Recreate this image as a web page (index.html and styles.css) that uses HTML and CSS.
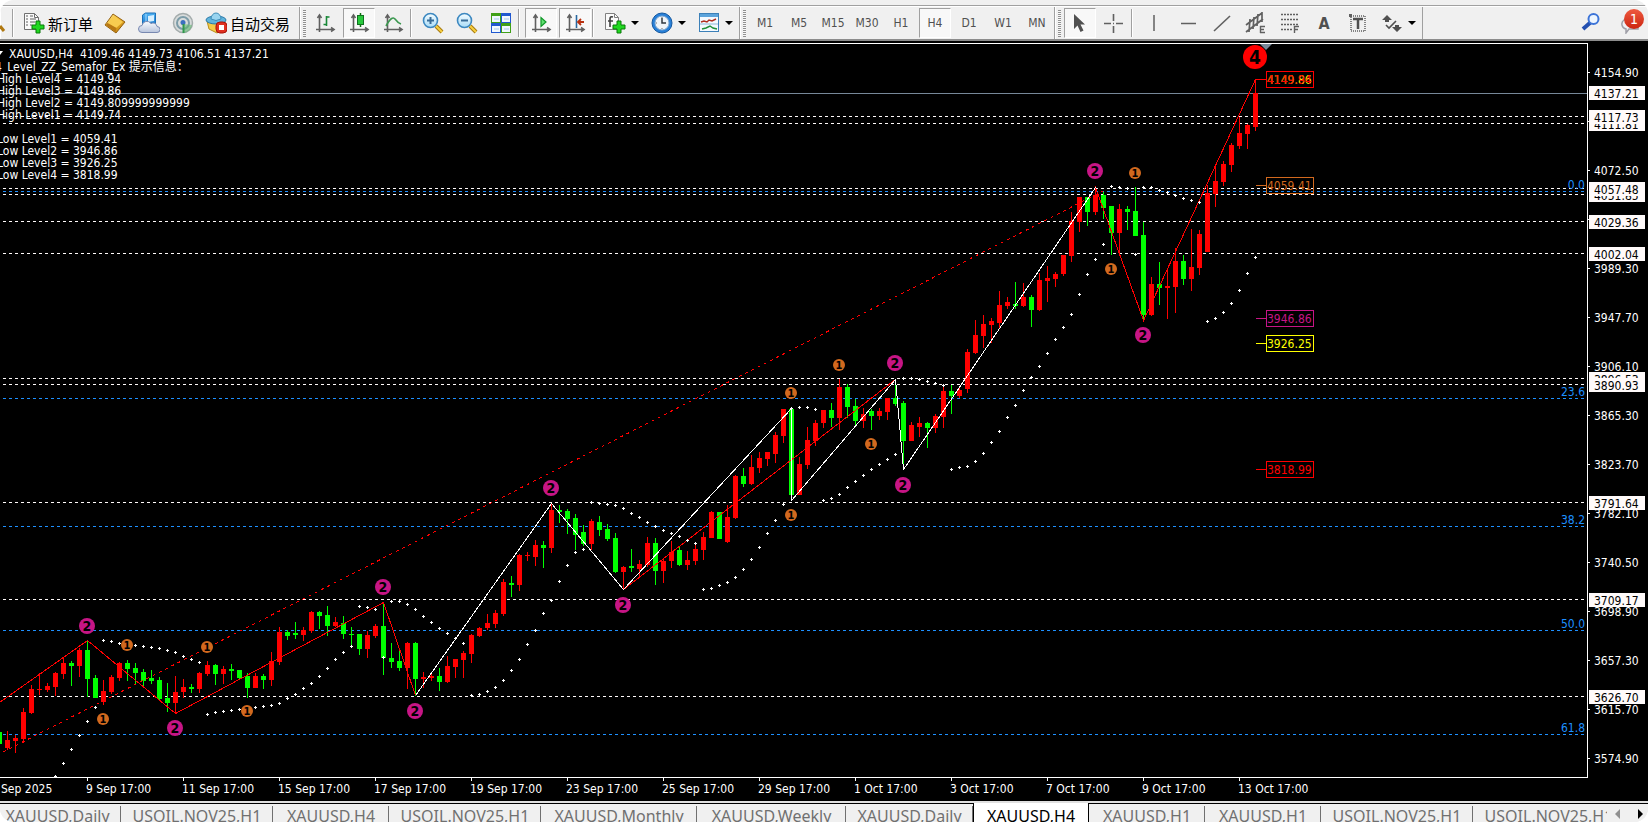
FILE: index.html
```
<!DOCTYPE html>
<html lang="zh-CN">
<head>
    <meta charset="UTF-8">
    <meta name="viewport" content="width=device-width, initial-scale=1.0">
    <title>XAUUSD,H4</title>
    <link rel="stylesheet" href="styles.css">
</head>
<body>
    <svg width="0" height="0" class="defs" aria-hidden="true">
        <defs>
            <linearGradient id="gold" x1="0" y1="0" x2="1" y2="1"><stop offset="0" stop-color="#fff0a0"/><stop offset=".5" stop-color="#f0b428"/><stop offset="1" stop-color="#a86a08"/></linearGradient>
            <linearGradient id="sky" x1="0" y1="0" x2="0" y2="1"><stop offset="0" stop-color="#50b4f4"/><stop offset="1" stop-color="#1c7cd0"/></linearGradient>
            <linearGradient id="cloud" x1="0" y1="0" x2="0" y2="1"><stop offset="0" stop-color="#fafcff"/><stop offset="1" stop-color="#b8c4dc"/></linearGradient>
            <linearGradient id="glass" x1="0" y1="0" x2="0" y2="1"><stop offset="0" stop-color="#f4fcff"/><stop offset="1" stop-color="#a8dcf8"/></linearGradient>
            <!-- 坐标轴图标 -->
            <g id="axes" fill="none" stroke="#606060" stroke-width="1.6">
                <path d="M5.500 20V4M2 17.500H19"/>
                <path d="M3.500 6L5.500 3L7.500 6M17 15.500L20 17.500L17 19.500"/>
            </g>
            <g id="plus"><path d="M12 9h4v4h4v4h-4v4h-4v-4H8v-4h4z" fill="#20d820" stroke="#087808"/></g>
        </defs>
    </svg>

    <div class="menu-edge"></div>

    <!-- 工具栏 -->
    <div class="toolbar">
        <div class="group group-main">
            <svg class="cut" viewBox="0 0 12 22"><path d="M0 14L4 19" stroke="#b07810" stroke-width="3"/></svg>
            <span class="sep"></span>
            <button class="text-btn">
                <svg class="icon" viewBox="0 0 22 22"><path d="M1.500 1.500h10l4 4v12h-14z" fill="#fafafa" stroke="#707070"/><path d="M11.500 1.500v4h4" fill="none" stroke="#707070"/><path d="M3 4h2M7 4h3M3 7h2M7 7h6M3 10h2M7 10h5M3 13h2M7 13h2" stroke="#606060"/><use href="#plus" x="1"/></svg>
                新订单
            </button>
            <button class="btn" aria-label="市场报价"><svg class="icon" viewBox="0 0 22 22"><path d="M1 13L9 2l12 8-9 11z" fill="url(#gold)" stroke="#946010"/><path d="M4 11l6-7 9 6-7 6z" fill="#f8cc50"/><path d="M1.500 13l10 7 1-4-9-5z" fill="#b87814"/></svg></button>
            <button class="btn" aria-label="数据窗口"><svg class="icon" viewBox="0 0 22 22"><path d="M4.500 3l3-2h10v11h-13z" fill="url(#sky)" stroke="#1c70b8"/><path d="M8 2v10" stroke="#a8dcff"/><path d="M10 4l6-1v6l-6 1z" fill="#d8f0ff"/><path d="M4 20.500a3.500 3.500 0 0 1 0-7 5 5 0 0 1 9-2 4 4 0 0 1 6 3 3 3 0 0 1 0 6z" fill="url(#cloud)" stroke="#7888b0"/></svg></button>
            <button class="btn" aria-label="信号"><svg class="icon" viewBox="0 0 22 22"><circle cx="11" cy="11" r="9.500" fill="#d8dcdc" stroke="#a4acac" stroke-width="1.500"/><circle cx="11" cy="11" r="6" fill="none" stroke="#7c9ca8" stroke-width="2"/><circle cx="11" cy="10.500" r="2.500" fill="#3c70c0"/><path d="M11 12l1 9a10 10 0 0 0 8-8" fill="#60b870" opacity=".6"/><path d="M11.500 12v9" stroke="#30984c" stroke-width="2"/></svg></button>
            <button class="text-btn">
                <svg class="icon" viewBox="0 0 22 22"><path d="M2 9l2 8 8 4 6-4 2-8z" fill="#f4cc48" stroke="#b88c18"/><ellipse cx="11" cy="8" rx="10" ry="4" fill="#60b4dc" stroke="#2878a8"/><path d="M6 7a5 6 0 0 1 10 0q-5 3-10 0z" fill="#98d4f0" stroke="#3c8cb8"/><rect x="11" y="10" width="11" height="11" rx="4" fill="#e03020" stroke="#a81408"/><rect x="14" y="13" width="5" height="5" fill="#fff"/></svg>
                自动交易
            </button>
        </div>

        <div class="group">
            <span class="grip"></span>
            <button class="btn" aria-label="柱状图"><svg class="icon" viewBox="0 0 22 22"><use href="#axes"/><path d="M12.500 4v10M12.500 5h3M9.500 12.500h3" stroke="#188838" stroke-width="1.600"/></svg></button>
            <button class="btn pressed" aria-label="阴阳烛"><svg class="icon" viewBox="0 0 22 22"><use href="#axes"/><path d="M12.500 1v14" stroke="#107010" stroke-width="1.500"/><rect x="9.500" y="3.500" width="6" height="9" fill="#28c83c" stroke="#107020"/></svg></button>
            <button class="btn" aria-label="折线图"><svg class="icon" viewBox="0 0 22 22"><use href="#axes"/><path d="M4 14Q10 3 13 7T19 12" fill="none" stroke="#3c9850" stroke-width="1.600"/></svg></button>
            <span class="sep"></span>
            <button class="btn" aria-label="放大"><svg class="icon" viewBox="0 0 22 22"><path d="M14 14l6 6" stroke="#a87c10" stroke-width="4"/><path d="M14 14l6 6" stroke="#f8d040" stroke-width="2"/><circle cx="8.500" cy="8.500" r="7" fill="url(#glass)" stroke="#3c88c0" stroke-width="1.600"/><path d="M5 8.500h7M8.500 5v7" stroke="#386c98" stroke-width="2"/></svg></button>
            <button class="btn" aria-label="缩小"><svg class="icon" viewBox="0 0 22 22"><path d="M14 14l6 6" stroke="#a87c10" stroke-width="4"/><path d="M14 14l6 6" stroke="#f8d040" stroke-width="2"/><circle cx="8.500" cy="8.500" r="7" fill="url(#glass)" stroke="#3c88c0" stroke-width="1.600"/><path d="M5 8.500h7" stroke="#386c98" stroke-width="2"/></svg></button>
            <button class="btn" aria-label="平铺窗口"><svg class="icon" viewBox="0 0 22 22"><path d="M1 1h10v10H1zM11 11h10v10H11z" fill="#40a018"/><path d="M11 1h10v10H11zM1 11h10v10H1z" fill="#2058d0"/><path d="M2 4h8v6H2zM12 4h8v6h-8zM2 14h8v6H2zM12 14h8v6h-8z" fill="#f0f8ff"/><path d="M4 7h5M14 7h5M4 17h5M14 17h5" stroke="#a8c8e8"/></svg></button>
            <span class="sep"></span>
            <button class="btn pressed" aria-label="自动滚动"><svg class="icon" viewBox="0 0 22 22"><use href="#axes"/><path d="M11 5.500v9l5-4.500z" fill="#60e070" stroke="#109828" stroke-width="1.200"/></svg></button>
            <button class="btn pressed" aria-label="图表平移"><svg class="icon" viewBox="0 0 22 22"><use href="#axes"/><path d="M12.500 3v13" stroke="#2868a0" stroke-width="1.600"/><path d="M14 10h6M17 7l-3 3 3 3" fill="none" stroke="#b83010" stroke-width="1.800"/></svg></button>
            <span class="sep"></span>
            <button class="btn drop" aria-label="指标"><svg class="icon" viewBox="0 0 22 22"><path d="M1.500 1.500h9l4 4v12h-13z" fill="#fafafa" stroke="#808080"/><path d="M10.500 1.500v4h4" fill="none" stroke="#808080"/><path d="M9 5q-3-1-3 2v8M4 9h5" fill="none" stroke="#404040" stroke-width="1.600"/><use href="#plus" x="1"/></svg><i class="caret"></i></button>
            <button class="btn drop" aria-label="时间周期"><svg class="icon" viewBox="0 0 22 22"><circle cx="11" cy="11" r="10" fill="#2880d8" stroke="#1458a0"/><circle cx="11" cy="11" r="7" fill="#f0f4f8" stroke="#80a8d0"/><path d="M11 6v5h4" fill="none" stroke="#303840" stroke-width="1.500"/><path d="M11 5v1M11 16v1M5 11h1" stroke="#707070"/></svg><i class="caret"></i></button>
            <button class="btn drop" aria-label="模板"><svg class="icon" viewBox="0 0 22 22"><rect x="1.500" y="1.500" width="19" height="18" fill="#f4faff" stroke="#3c80b8"/><path d="M2 2h18v3H2z" fill="#5ca4dc"/><path d="M3 10l3-1 3 1 2-2 3 1 4-2" fill="none" stroke="#b03020" stroke-width="1.500"/><path d="M2 12h18" stroke="#90b8d8"/><path d="M4 17l4-1 4-2 3 2 4 1" fill="none" stroke="#209038" stroke-width="1.500"/></svg><i class="caret"></i></button>
        </div>

        <!-- 时间周期 -->
        <div class="group">
            <span class="grip"></span>
            <button class="btn">M1</button>
            <button class="btn">M5</button>
            <button class="btn">M15</button>
            <button class="btn">M30</button>
            <button class="btn">H1</button>
            <button class="btn pressed">H4</button>
            <button class="btn">D1</button>
            <button class="btn">W1</button>
            <button class="btn">MN</button>
        </div>

        <!-- 画线工具 -->
        <div class="group group-last">
            <span class="grip"></span>
            <button class="btn pressed" aria-label="光标"><svg class="icon" viewBox="0 0 22 22"><path d="M5 2v15l3.500-3.500L11.500 20l3-1.500-3-6H16z" fill="#505050"/></svg></button>
            <button class="btn" aria-label="十字准线"><svg class="icon" viewBox="0 0 22 22"><path d="M10.500 2v7M10.500 14v7M1 11.500h7M13 11.500h7M10 11.500h1" stroke="#606060" stroke-width="1.600"/></svg></button>
            <span class="sep"></span>
            <button class="btn" aria-label="垂直线"><svg class="icon" viewBox="0 0 22 22"><path d="M11 3v16" stroke="#606060" stroke-width="1.500"/></svg></button>
            <button class="btn" aria-label="水平线"><svg class="icon" viewBox="0 0 22 22"><path d="M4 11.500h15" stroke="#606060" stroke-width="1.500"/></svg></button>
            <button class="btn" aria-label="趋势线"><svg class="icon" viewBox="0 0 22 22"><path d="M3 19L19 4" stroke="#606060" stroke-width="1.600"/></svg></button>
            <button class="btn" aria-label="等距通道"><svg class="icon" viewBox="0 0 22 22"><path d="M1 13L17 1M1 20L18 7M5 7l-1 13M9 5L8 17M13 2l-1 12M17 0v10" stroke="#606060" stroke-width="1.700"/><path d="M15.500 14v7M15 14.500h5M15 17.500h4M15 20.500h5" stroke="#606060" stroke-width="1.400"/></svg></button>
            <button class="btn" aria-label="斐波那契回调"><svg class="icon" viewBox="0 0 22 22"><path d="M2 2.500h17M2 7.500h17M2 12.500h17M2 17.500h11" stroke="#606060" stroke-width="1.500" stroke-dasharray="2 1"/><path d="M15.500 14v7M15 14.500h5M15 17.500h4" stroke="#606060" stroke-width="1.400"/></svg></button>
            <button class="btn letter">A</button>
            <button class="btn" aria-label="文字标签"><svg class="icon" viewBox="0 0 22 22"><path d="M4 4h14v15H4z" fill="none" stroke="#606060" stroke-width="1.500" stroke-dasharray="1 1"/><path d="M6 7h10M11 7v10" stroke="#505050" stroke-width="2.500"/><path d="M2 2h3v3H2z" fill="#606060"/></svg></button>
            <button class="btn drop" aria-label="箭头"><svg class="icon" viewBox="0 0 22 22"><path d="M6 3l5 5H8v2H4V8H1zM16 20l5-5h-3v-2h-4v2h-3z" fill="#505050"/><path d="M5 13l3 3 7-7" fill="none" stroke="#505050" stroke-width="1.600"/></svg><i class="caret"></i></button>
        </div>

        <div class="tray">
            <button class="btn" aria-label="搜索"><svg class="icon" viewBox="0 0 22 22"><path d="M3 17l8-7" stroke="#2450b0" stroke-width="4"/><circle cx="13.500" cy="7" r="5" fill="#eef6ff" stroke="#3c74d8" stroke-width="2"/></svg></button>
            <button class="btn mail" aria-label="消息">
                <svg class="icon" viewBox="0 0 22 22"><path d="M4 8h14v9h-9l-3 4v-4a5 5 0 0 1-2-9z" fill="#f0f0f4" stroke="#a0a0a8" stroke-width="1.500"/></svg>
                <span class="badge">1</span>
            </button>
        </div>
    </div>

    <!-- 图表 -->
    <div class="chart">
        <div class="plot"><svg id="plot"></svg></div>
        <div class="scale"><svg id="scale"></svg></div>
        <div class="dates"><svg id="dates"></svg></div>
    </div>

    <!-- 图表标签 -->
    <div class="tabs">
        <button class="tab daily first">XAUUSD,Daily</button>
        <button class="tab oil">USOIL.NOV25,H1</button>
        <button class="tab">XAUUSD,H4</button>
        <button class="tab oil">USOIL.NOV25,H1</button>
        <button class="tab monthly">XAUUSD,Monthly</button>
        <button class="tab weekly">XAUUSD,Weekly</button>
        <button class="tab daily">XAUUSD,Daily</button>
        <button class="tab active">XAUUSD,H4</button>
        <button class="tab">XAUUSD,H1</button>
        <button class="tab">XAUUSD,H1</button>
        <button class="tab oil">USOIL.NOV25,H1</button>
        <button class="tab oil">USOIL.NOV25,H1</button>
        <div class="tab-scroll">
            <button class="arrow left" aria-label="向左"></button>
            <button class="arrow right" aria-label="向右"></button>
        </div>
    </div>

    <script src="chart.js"></script>
</body>
</html>
```
FILE: styles.css
```
* {
    box-sizing: border-box;
}
html {
    background: white;
}
body {
    margin: 0;
    height: 100vh;
    display: flex;
    flex-direction: column;
    overflow: hidden;
    border-radius: 14px;
    background: #f0f0f0;
    font-family: "DejaVu Sans Condensed", "Noto Sans", "Noto Sans CJK SC", sans-serif;
    font-size: 12px;
}
button {
    border: none;
    background: none;
    padding: 0;
    margin: 0;
    font: inherit;
    color: inherit;
}
.defs {
    position: absolute;
}
.menu-edge {
    height: 7px;
    flex: none;
    border-bottom: 1px solid white;
    box-shadow: inset 0 -1px #a0a0a0;
}

/* 工具栏 */
.toolbar {
    display: flex;
    flex: none;
    height: 34px;
    border-bottom: 2px solid #8c8c8c;
    color: #505050;
}
.group {
    display: flex;
    flex: none;
    align-items: center;
    border-left: 1px solid #a0a0a0;
    box-shadow: inset 1px 0 white;
}
.group-main {
    width: 299px;
    border-left: none;
}
.group-last {
    border-right: 1px solid #a0a0a0;
}
.cut {
    width: 12px;
    height: 22px;
}
.sep {
    width: 6px;
    height: 28px;
    border-left: 1px solid #a0a0a0;
    background: linear-gradient(white, white) 0 0 / 1px 100% no-repeat;
}
.grip {
    width: 8px;
    height: 27px;
    padding-left: 3px;
}
.grip::before {
    content: "";
    display: block;
    width: 3px;
    height: 100%;
    background: repeating-linear-gradient(#909090 0 1px, #f8f8f8 1px 2px);
}
.btn {
    display: flex;
    align-items: center;
    justify-content: center;
    width: 34px;
    height: 30px;
}
.pressed {
    width: 32px;
    margin: 0 1px;
    border: 1px solid white;
    border-top-color: #a0a0a0;
    border-left-color: #a0a0a0;
    background: #f8f8f8;
}
.drop {
    width: 47px;
    gap: 5px;
}
.letter {
    font-size: 16px;
    font-weight: bold;
}
.text-btn {
    display: flex;
    align-items: center;
    gap: 3px;
    padding: 0 5px;
    height: 30px;
    color: black;
    font-family: "Noto Sans CJK SC", sans-serif;
    font-size: 15px;
    white-space: nowrap;
}
.icon {
    width: 22px;
    height: 22px;
    flex: none;
}
.caret {
    border: 4px solid transparent;
    border-top-color: black;
    border-bottom: none;
}
.tray {
    display: flex;
    align-items: center;
    margin-left: auto;
    gap: 6px;
}
.mail {
    position: relative;
}
.badge {
    position: absolute;
    top: 1px;
    right: 4px;
    width: 20px;
    height: 20px;
    border-radius: 50%;
    background: linear-gradient(#ee5a40, #cc2410);
    color: white;
    font-size: 14px;
    line-height: 20px;
    text-align: center;
}

/* 图表 */
.chart {
    flex: 1;
    min-height: 0;
    display: grid;
    grid-template-columns: 1fr 60px;
    grid-template-rows: 1fr 23px;
    padding-top: 2px;
    background: black;
}
.chart svg {
    display: block;
    width: 100%;
    height: 100%;
}
.plot {
    min-width: 0;
    min-height: 0;
    border: 1px solid white;
    border-left: none;
}
.dates {
    grid-column: 1 / 3;
}
.chart text {
    fill: white;
    white-space: pre;
}
.chart .on-tag {
    fill: black;
}
.chart .fibo {
    fill: #1e90ff;
    text-anchor: end;
}
.chart .mark {
    fill: black;
    font-weight: bold;
    text-anchor: middle;
}

/* 图表标签 */
.tabs {
    position: relative;
    display: flex;
    flex: none;
    height: 21px;
    overflow: hidden;
    border-top: 2px solid #e0e0e0;
    box-shadow: inset 0 1px black;
    background: #f0f0f0;
    font-family: "Noto Sans", sans-serif;
    font-size: 16px;
    color: #707070;
}
.tab {
    flex: none;
    width: 116px;
    height: 24px;
    margin-top: 1px;
    line-height: 24px;
    white-space: nowrap;
    background: linear-gradient(#707070, #707070) 100% 2px / 1px 100% no-repeat;
}
.daily {
    width: 127px;
}
.first {
    margin-left: -6px;
}
.oil {
    width: 152px;
}
.monthly {
    width: 156px;
}
.weekly {
    width: 149px;
}
.active {
    height: 26px;
    margin-top: 0;
    line-height: 26px;
    border: solid black;
    border-width: 0 1px;
    background: white;
    color: black;
}
.tab-scroll {
    position: absolute;
    top: 1px;
    right: 0;
    height: 20px;
    display: flex;
    align-items: center;
    gap: 18px;
    padding: 0 5px 0 8px;
    background: #f0f0f0;
}
.arrow {
    width: 5px;
    border: solid transparent;
    border-width: 5px 0;
}
.left {
    border-right: 5px solid #909090;
}
.right {
    border-left: 5px solid black;
}
```
FILE: chart.js
```
// 窗口内 y 坐标, 绘图区从 44 开始
const TOP = 44;
const STEP = 8;
const RED = '#ff0000';
const GREEN = '#00ff00';

// 每根K线: 颜色, 最高, 实体上, 实体下, 最低 (从第 -1 根开始)
const candles = `g 732 732 744 744|r 731 740 748 750|r 735 738 741 753|r 708 712 739 743|r 685 689 713 714|r 673 689 690 695
r 683 686 690 692|r 672 673 687 696|r 657 663 674 679|g 661 663 666 686|r 648 650 666 677|g 640 650 679 697
g 675 678 698 698|r 680 691 702 705|r 675 677 692 694|r 662 663 678 681|g 660 663 669 681|g 663 668 673 684
g 669 672 681 688|g 670 678 681 684|g 677 680 699 700|g 683 698 703 712|r 676 692 703 713|r 679 687 692 698
g 684 687 689 693|r 672 673 689 693|r 661 665 674 676|g 664 665 674 685|r 666 669 674 684|g 664 669 671 680
g 670 670 678 680|g 673 676 688 698|r 673 676 688 688|g 674 676 680 689|r 652 661 680 686|r 627 632 662 665
g 630 632 636 640|g 622 633 635 639|r 627 630 635 641|r 611 612 631 633|g 611 612 616 629|g 606 615 626 636
r 617 622 626 627|g 616 623 634 639|g 627 634 635 646|g 634 634 649 655|r 631 635 649 658|r 624 626 636 638
g 602 626 658 675|g 643 658 662 668|g 650 661 668 671|r 642 643 668 689|g 642 643 679 696|r 672 677 679 688
r 673 676 678 681|g 668 676 682 691|r 656 666 682 683|r 659 659 667 678|r 651 653 660 678|r 634 635 654 663
r 627 628 636 637|r 614 623 628 630|r 610 613 624 628|r 579 582 614 616|g 576 583 585 597|r 554 555 585 591
r 552 555 556 561|r 540 545 557 566|g 541 545 548 568|r 503 510 548 553|g 505 510 512 523|g 509 511 519 534
g 514 518 535 550|g 525 532 544 546|r 519 521 544 550|g 516 522 530 536|g 524 529 539 541|g 533 538 572 573
r 566 567 572 589|g 549 566 568 572|r 560 564 569 576|r 537 543 565 567|g 538 543 571 585|r 559 561 571 583
r 541 552 561 568|g 547 550 565 566|r 551 560 565 570|r 544 549 561 565|r 532 537 550 560|r 511 512 538 538
g 512 512 539 539|r 505 517 542 543|r 475 476 518 519|g 468 476 484 487|r 455 467 484 485|r 452 458 468 473
r 452 452 459 466|r 432 435 454 463|r 409 409 436 443|g 408 409 495 501|r 457 464 495 495|r 427 440 465 469
r 420 423 441 446|r 410 410 423 428|g 403 410 418 427|r 379 387 418 430|g 384 387 407 418|g 399 406 421 425
r 408 414 421 428|g 409 411 416 430|r 408 411 416 420|r 398 398 412 420|g 379 398 404 406|g 401 403 441 469
r 422 425 441 441|r 417 423 427 437|g 422 423 428 448|r 414 416 428 433|r 385 391 417 428|g 385 391 396 414
r 388 390 396 398|r 349 352 389 393|r 320 335 353 354|r 315 324 336 348|r 318 321 325 343|r 291 305 323 328
r 297 302 306 309|g 282 304 306 309|r 283 297 306 307|g 295 297 310 327|r 273 280 310 311|r 266 278 281 302
r 272 274 279 287|r 255 255 274 276|r 212 221 256 262|r 197 197 222 232|g 197 197 212 226|r 186 195 212 215
g 192 195 208 219|g 206 206 233 255|r 204 209 233 254|g 206 209 212 230|g 187 211 236 236|g 222 235 315 322
r 277 284 315 316|g 262 284 288 305|r 270 286 288 319|r 248 261 287 313|g 255 261 279 285|r 229 267 279 291
r 230 234 268 275|r 185 193 252 252|r 164 181 194 207|r 161 164 182 186|r 143 145 165 172|r 117 133 146 149
r 124 125 134 149|r 79 93 127 131`.split(/[|\n]/);

// 抛物线指标的点, 从第 6 根开始
const sar = [776, 763, 749, 735, 721, 707, 640, 641, 643, 644, 645, 646, 647, 648, 650, 652, 656, 659, 662,
    714, 712, 711, 710, 709, 708, 707, 706, 705, 703, 698, 694, 688, 683, 676, 668, 659, 652, 646,
    606, 607, 609, 657, 601, 601, 604, 609, 616, 622, 628, 633, 638, 643,
    695, 694, 691, 687, 680, 670, 659, 644, 630, 613, 600, 581, 565, 552, 549,
    502, 503, 504, 505, 508, 513, 517, 522, 526, 530, 533, 536, 540, 543,
    589, 588, 585, 582, 577, 569, 559, 547, 533, 520, 504,
    408, 407, 407, 409, 500, 498, 494, 487, 481, 475, 469, 464, 459, 454,
    378, 378, 379, 381, 383, 385, 469, 467, 466, 461, 453, 442, 431, 417, 405, 390, 377, 366, 353, 339,
    327, 314, 294, 274, 259, 244, 186, 187, 188, 254, 187, 187, 190, 192, 195, 198, 200, 202,
    321, 318, 312, 303, 290, 273, 257];

// 水平价位 [y, 价格], 靠后的盖住靠前的
const levels = [[123, '4111.81'], [116, '4117.73'], [194, '4051.85'], [188, '4057.48'], [221, '4029.36'], [253, '4002.04'],
    [378, '3896.53'], [384, '3890.93'], [502, '3791.64'], [599, '3709.17'], [696, '3626.70']];
const fibo = [[191, '0.0'], [398, '23.6'], [526, '38.2'], [630, '50.0'], [734, '61.8']];
const ticks = [[72, '4154.90'], [121, ''], [170, '4072.50'], [219, ''], [268, '3989.30'], [317, '3947.70'], [366, '3906.10'],
    [415, '3865.30'], [464, '3823.70'], [513, '3782.10'], [562, '3740.50'], [611, '3698.90'], [660, '3657.30'],
    [709, '3615.70'], [758, '3574.90']];
const days = ['9 Sep', '11 Sep', '15 Sep', '17 Sep', '19 Sep', '23 Sep', '25 Sep', '29 Sep', '1 Oct', '3 Oct', '7 Oct', '9 Oct', '13 Oct'];

const X = i => 7 + i * STEP;
const line = (x1, y1, x2, y2, color, dash) =>
    `<line x1="${x1}" y1="${y1 - TOP}" x2="${x2}" y2="${y2 - TOP}" stroke="${color}" stroke-dasharray="${dash || 'none'}" shape-rendering="crispEdges"/>`;
const rect = (x, y, w, h, color) =>
    `<rect x="${x}" y="${y - TOP}" width="${w}" height="${h}" fill="${color}" shape-rendering="crispEdges"/>`;
const text = (x, y, str, cls) => `<text x="${x}" y="${y - TOP}" class="${cls || ''}">${str}</text>`;
const zigzag = (points, color) =>
    `<polyline points="${points.map(p => `${p[0] + 0.5},${p[1] - TOP + 0.5}`).join(' ')}" fill="none" stroke="${color}" shape-rendering="crispEdges"/>`;

// 水平线和斐波那契线
let out = '';
levels.forEach(([y]) => out += line(3, y + 0.5, '100%', y + 0.5, '#fffafa', '3 3'));
fibo.forEach(([y]) => out += line(3, y + 0.5, '100%', y + 0.5, '#1e90ff', '3 3'));
out += line(0, 93.5, '100%', 93.5, '#778899');

// K线
candles.forEach((row, n) => {
    const [c, high, top, bottom, low] = row.split(' ').map((v, k) => k ? Number(v) : v);
    const x = X(n - 1);
    const color = c === 'r' ? RED : GREEN;
    out += rect(x, high, 1, low - high, color) + rect(x - 2, top, 5, Math.max(1, bottom - top), color);
});

// 趋势线和之字形
out += line(3, 752, 1103, 191, RED, '3 4');
out += zigzag([[-1, 702], [87, 640], [175, 713], [383, 602], [415, 695]], RED);
out += zigzag([[623, 589], [895, 379]], RED);
out += zigzag([[1095, 187], [1143, 320], [1255, 79]], RED);
out += zigzag([[415, 695], [551, 503], [623, 589], [791, 408], [791, 500], [895, 379], [903, 469], [1095, 187]], 'white');

sar.forEach((y, n) => {
    const x = X(n + 6);
    out += rect(x - 1, y, 3, 1, 'white') + rect(x, y - 1, 1, 3, 'white');
});

// 信号圆点
const mark = (x, y, r, size, n, color) =>
    `<circle cx="${x}" cy="${y - TOP}" r="${r}" fill="${color}"/>` +
    `<text x="${x}" y="${y - TOP + Math.round(size * 0.37)}" class="mark" font-size="${size}">${n}</text>`;
[[87, 626], [175, 728], [383, 587], [415, 711], [551, 488], [623, 605], [895, 363], [903, 485], [1095, 171], [1143, 335]]
    .forEach(([x, y]) => out += mark(x, y, 8, 14, 2, '#c71585'));
[[103, 719], [127, 645], [207, 647], [247, 711], [791, 393], [791, 515], [839, 365], [871, 444], [1111, 269], [1135, 173]]
    .forEach(([x, y]) => out += mark(x, y, 6, 11, 1, '#d2691e'));
out += '<path d="M1260 0h12l-6 6z" fill="#778899"/>';
out += mark(1255, 57, 12, 19, 4, RED);

// 价格标签
const priceTag = (y, price, color) =>
    line(1256, y + 0.5, 1266, y + 0.5, color) +
    `<rect x="1266.5" y="${y - 8 - TOP + 0.5}" width="47" height="16" fill="none" stroke="${color}"/>` +
    `<text x="1267" y="${y + 5 - TOP}" style="fill:${color}">${price}</text>`;
out += priceTag(79, '4149.86', '#ffff00');
out += priceTag(79, '4149.94', RED);
out += priceTag(185, '4059.41', '#d2691e');
out += priceTag(318, '3946.86', '#c71585');
out += priceTag(343, '3926.25', '#ffff00');
out += priceTag(469, '3818.99', RED);

// 左上角文字
out += '<path d="M0 7h3l-3 4z" fill="white"/>';
out += text(9, 58, 'XAUUSD,H4  4109.46 4149.73 4106.51 4137.21');
out += text(-5, 71, '4_Level_ZZ_Semafor_Ex 提示信息：');
['High Level4 = 4149.94', 'High Level3 = 4149.86', 'High Level2 = 4149.809999999999', 'High Level1 = 4149.74', '',
    'Low Level1 = 4059.41', 'Low Level2 = 3946.86', 'Low Level3 = 3926.25', 'Low Level4 = 3818.99']
    .forEach((str, n) => out += text(-3, 83 + n * 12, str));
document.getElementById('plot').innerHTML = out +
    `<svg x="100%" overflow="visible">${fibo.map(([y, s]) => text(-2, y - 2, s, 'fibo')).join('')}</svg>`;

// 右侧价格刻度 (比绘图区高 1px)
let scale = '';
ticks.forEach(([y, s]) => scale += rect(0, y, 2, 1, 'white') + text(6, y + 5, s));
const box = (y, s) => rect(1, y - 6, 56, 14, '#fffafa') + text(6, y + 6, s, 'on-tag');
levels.forEach(([y, s]) => scale += box(y, s));
scale += box(92, '4137.21');
document.getElementById('scale').innerHTML = `<g transform="translate(0,1)">${scale}</g>`;

// 日期刻度
let dates = text(1, TOP + 15, 'Sep 2025');
days.forEach((d, n) => dates += rect(X(10 + n * 12), TOP, 1, 3, 'white') + text(X(10 + n * 12) - 1, TOP + 15, d + ' 17:00'));
document.getElementById('dates').innerHTML = dates;
```
